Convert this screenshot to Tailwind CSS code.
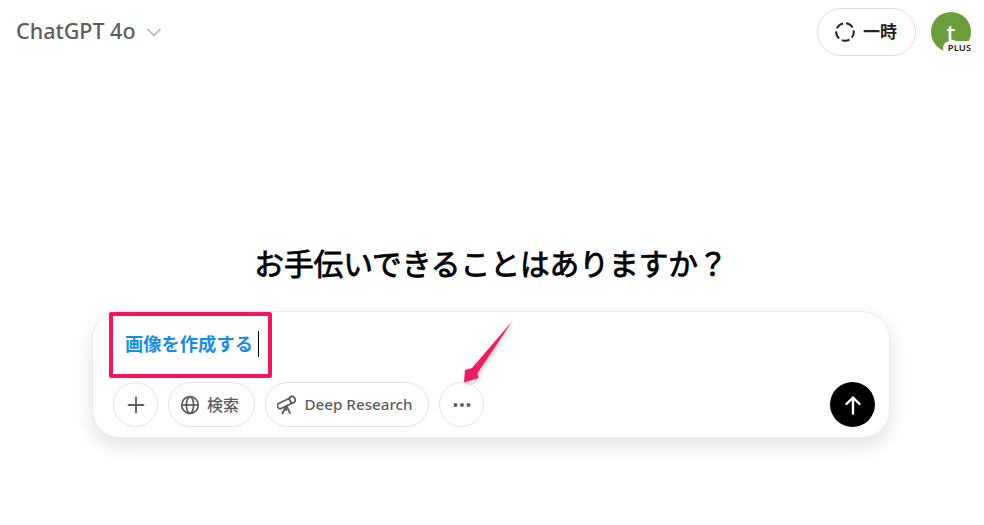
<!DOCTYPE html>
<html lang="ja">
<head>
  <meta charset="UTF-8" />
  <title>ChatGPT</title>
  <script src="https://cdn.jsdelivr.net/npm/@tailwindcss/browser@4"></script>
</head>
<body class="bg-white font-['Noto_Sans','Noto_Sans_CJK_JP',sans-serif] overflow-hidden">
  <div class="relative w-[984px] h-[525px] overflow-hidden">
    <!-- header -->
    <header class="flex items-start justify-between pl-4 pr-[13px] pt-2">
      <div class="flex items-center gap-[10px] h-12 pb-[1px]">
        <span class="text-[21.5px] font-medium text-[#5d5d5d]">ChatGPT 4o</span>
        <svg class="w-[16px] h-[16px] text-[#b4b4b4]" viewBox="0 0 16 16" fill="none" stroke="currentColor" stroke-width="1.7" stroke-linecap="round" stroke-linejoin="round"><path d="M2 5.500l6 6 6-6"/></svg>
      </div>
      <div class="flex items-center gap-[15px]">
        <button class="flex items-center justify-center gap-[8px] w-[99px] h-12 pr-[1px] rounded-full border border-[#dedede] bg-white">
          <svg class="w-[20px] h-[20px] text-[#222]" viewBox="0 0 20 20" fill="none" stroke="currentColor" stroke-width="2"><circle cx="10" cy="10" r="8.800" stroke-dasharray="8 3.060" stroke-dashoffset="2"/></svg>
          <span class="text-[17px] font-bold text-[#222]">一時</span>
        </button>
        <div class="relative w-10 h-10 rounded-full bg-[#6b9e3a] flex items-start justify-center">
          <span class="text-white text-[23px] font-medium leading-[14px] h-[14px] mt-[14px]">t</span>
          <span class="absolute right-[-5px] bottom-[-3px] w-[33px] h-[14px] flex items-center justify-center rounded-[7px] bg-white text-[9.500px] font-semibold text-[#222]">PLUS</span>
        </div>
      </div>
    </header>

    <!-- main -->
    <main class="flex flex-col items-center pt-[188px]">
      <h1 class="w-[798px] text-center text-[29.700px] leading-[40px] font-normal text-black ml-[-2px] [-webkit-text-stroke:0.8px_black]">お手伝いできることはありますか？</h1>
      <div class="mt-[27px] ml-[-2px] w-[798px] h-[127px] rounded-[28px] bg-white border border-[#ebebeb] shadow-[0_8px_18px_rgba(0,0,0,0.12)] flex flex-col justify-between pl-[20px] pr-[14px] pb-[10px]">
        <div class="flex items-center pt-[17px] pl-[12px]">
          <span class="text-[18.300px] leading-[30px] font-bold text-[#1a8ce0]">画像を作成する</span>
          <span class="ml-[5px] w-[1px] h-[26px] bg-black"></span>
        </div>
        <div class="flex items-center gap-[10px]">
          <button class="w-[45px] h-[45px] rounded-full border border-[#e3e3e3] flex items-center justify-center">
            <svg class="w-[20px] h-[20px] text-[#5d5d5d]" viewBox="0 0 20 20" fill="none" stroke="currentColor" stroke-width="1.800" stroke-linecap="round"><path d="M10 2.500v15M2.500 10h15"/></svg>
          </button>
          <button class="flex items-center gap-[7px] h-[45px] w-[87px] pr-[4px] justify-center rounded-full border border-[#e3e3e3]">
            <svg class="w-[20px] h-[20px] text-[#5d5d5d]" viewBox="0 0 20 20" fill="none" stroke="currentColor" stroke-width="1.700"><circle cx="10" cy="10" r="8.300"/><ellipse cx="10" cy="10" rx="3.600" ry="8.300"/><path d="M1.700 10h16.600"/></svg>
            <span class="text-[16px] font-medium text-[#5d5d5d]">検索</span>
          </button>
          <button class="flex items-center gap-[7px] h-[45px] w-[164px] pr-[4px] justify-center rounded-full border border-[#e3e3e3]">
            <svg class="w-[20px] h-[20px] text-[#5d5d5d]" viewBox="0 0 20 20" fill="none" stroke="currentColor" stroke-width="1.800" stroke-linejoin="round" stroke-linecap="round"><path d="M1.500 8.500l10.500-5 2.500 5-9.500 4.500a2.800 2.800 0 0 1-3.500-4.500z"/><path d="M12.500 3c1-1.500 2.800-2 4-1.200s2 2.800 1.500 4.400c-.4 1.200-1.700 2-3.500 2"/><path d="M9.500 11l3.500 7M8.500 12l-3 6.500M9 12.500v2.500"/></svg>
            <span class="text-[15.200px] font-medium text-[#5d5d5d]">Deep Research</span>
          </button>
          <button class="w-[45px] h-[45px] rounded-full border border-[#e3e3e3] flex items-center justify-center">
            <svg class="w-[20px] h-[6px] text-[#5d5d5d]" viewBox="0 0 20 6" fill="currentColor"><circle cx="3.500" cy="3" r="2"/><circle cx="10" cy="3" r="2"/><circle cx="16.500" cy="3" r="2"/></svg>
          </button>
          <button class="ml-auto w-[45px] h-[45px] rounded-full bg-black flex items-center justify-center">
            <svg class="w-[20px] h-[20px] text-white" viewBox="0 0 20 20" fill="none" stroke="currentColor" stroke-width="2.400" stroke-linecap="round" stroke-linejoin="round"><path d="M10 18.500V2.500M3.500 9L10 2.500 16.500 9"/></svg>
          </button>
        </div>
      </div>
    </main>

    <!-- annotations -->
    <div class="absolute left-[109px] top-[312px] w-[163px] h-[66px] border-4 border-[#f5145f] rounded-[2px]"></div>
    <svg class="absolute left-[460px] top-[318px] w-[56px] h-[66px] drop-shadow-[1px_2px_2px_rgba(0,0,0,0.25)]" viewBox="0 0 56 66" fill="#ee1c64"><path d="M52.500 3L17.500 55l1 5L4 64.500 5 52l7-2z"/></svg>
  </div>
</body>
</html>
